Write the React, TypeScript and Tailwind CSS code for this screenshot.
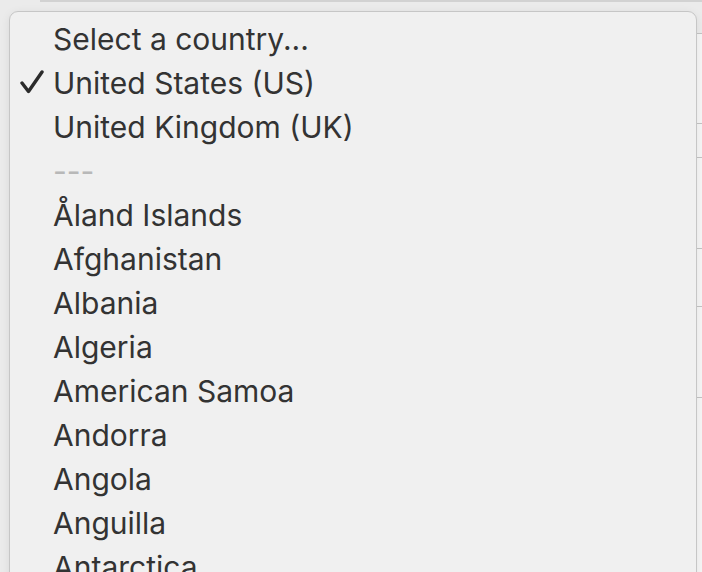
const options = [
  'Åland Islands',
  'Afghanistan',
  'Albania',
  'Algeria',
  'American Samoa',
  'Andorra',
  'Angola',
  'Anguilla',
  'Antarctica',
]

function Check() {
  return (
    <svg className="absolute left-[9px] top-[9px]" width="26" height="24" viewBox="0 0 26 24" fill="none">
      <path d="M3 13 L9.5 21.5 L23 2" stroke="#2b2b2b" strokeWidth="3.4" strokeLinecap="round" strokeLinejoin="round" />
    </svg>
  )
}

function Row({ label, checked, muted }: { label: string; checked?: boolean; muted?: boolean }) {
  return (
    <div className="relative flex h-[44px] items-center pl-[43px]">
      {checked && <Check />}
      <span className={muted ? 'text-[#b8b8b8]' : 'text-[#333333]'}>{label}</span>
    </div>
  )
}

export default function App() {
  return (
    <div className="relative h-[572px] w-[702px] overflow-hidden bg-[#ebebeb] font-['Inter',sans-serif] text-[30px] leading-[44px]">
      {/* page behind the menu */}
      <div className="absolute left-[40px] right-0 top-0 h-[2px] bg-[#d2d2d2]" />
      <div className="absolute bottom-0 right-0 top-[33px] flex w-[6px] flex-col border-l border-[#b9b9b9] bg-[#f6f6f6]">
        <div className="h-[90px] border-t border-[#c4c4c4]" />
        <div className="h-[34px] border-t border-[#c4c4c4]" />
        <div className="h-[91px] border-t border-[#c4c4c4]" />
        <div className="h-[58px] border-t border-[#c4c4c4]" />
        <div className="h-[91px] border-t border-[#c4c4c4]" />
        <div className="flex-1 border-t border-[#c4c4c4]" />
      </div>

      {/* menu */}
      <div className="absolute left-[9px] top-[11px] h-[600px] w-[688px] rounded-t-[9px] border border-[#c6c6c6] bg-[#f0f0f0] pt-[5px] shadow-[0_2px_10px_rgba(0,0,0,0.08)]">
        <Row label="Select a country..." />
        <Row label="United States (US)" checked />
        <Row label="United Kingdom (UK)" />
        <Row label="---" muted />
        {options.map((o) => (
          <Row key={o} label={o} />
        ))}
      </div>
    </div>
  )
}
